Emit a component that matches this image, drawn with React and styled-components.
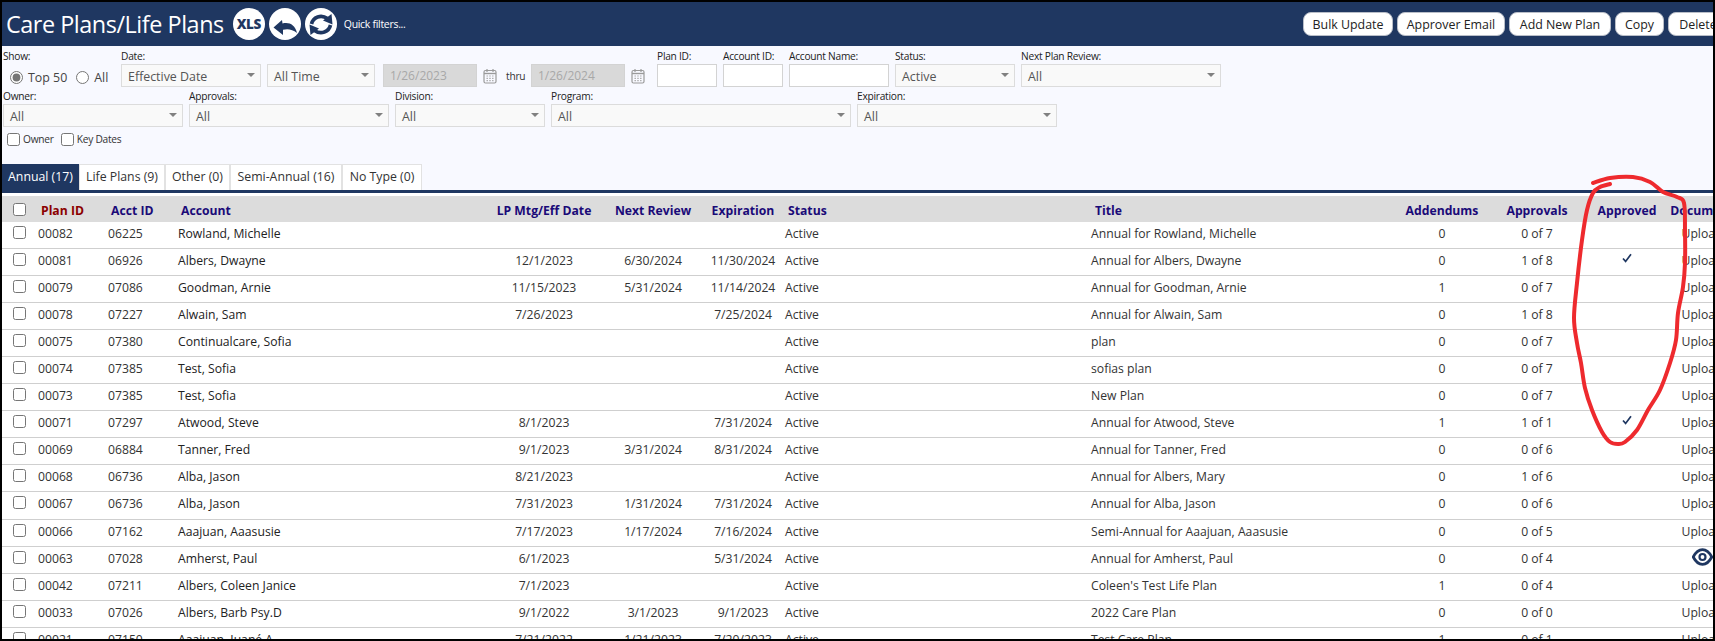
import React from 'react';
import styled, { createGlobalStyle } from 'styled-components';

const FONT = '"Open Sans", "Noto Sans", "Liberation Sans", sans-serif';
const NAVY = '#1f3761';

const Global = createGlobalStyle`
  html, body { margin: 0; padding: 0; background: #000; overflow: hidden; }
  * { box-sizing: border-box; }
  body { font-family: ${FONT}; }
`;

const Frame = styled.div`
  position: relative;
  width: 1715px;
  height: 641px;
  border: 2px solid #000;
  background: #fff;
  overflow: hidden;
`;

const TopBar = styled.header`
  display: flex;
  align-items: center;
  height: 44px;
  background: ${NAVY};
  overflow: hidden;
`;

const TitleGroup = styled.div`
  flex: 0 0 1301px;
  display: flex;
  align-items: center;
  padding-left: 4px;
`;

const PageTitle = styled.h1`
  margin: 0 9px 0 0;
  font-size: 23.4px;
  font-weight: 400;
  letter-spacing: -0.45px;
  color: #fff;
  white-space: nowrap;
`;

const RoundIcon = styled.span`
  flex: none;
  display: flex;
  align-items: center;
  justify-content: center;
  width: 32px;
  height: 32px;
  margin-right: 4px;
  border-radius: 50%;
  background: #fff;
  color: ${NAVY};
  font-size: 13.5px;
  font-weight: 800;
  letter-spacing: -0.4px;
`;

const QuickFilters = styled.span`
  margin-left: 3px;
  font-size: 10.5px;
  letter-spacing: -0.3px;
  color: #fff;
  white-space: nowrap;
`;

const ButtonGroup = styled.div`
  display: flex;
  gap: 4px;
  flex: none;
`;

const PillButton = styled.button`
  flex: none;
  width: ${p => p.$w}px;
  height: 24px;
  padding: 0;
  border: 1px solid #b9bec8;
  border-radius: 8px;
  background: #fff;
  color: #222;
  font-family: ${FONT};
  font-size: 12.4px;
  white-space: nowrap;
`;

const FilterPanel = styled.section`
  display: flex;
  flex-direction: column;
  height: 144px;
  padding: 4px 0 0 1px;
  background: #f8f9ff;
`;

const FilterRow = styled.div`
  display: flex;
  gap: 6px;
  margin-bottom: 3px;
`;

const Field = styled.div`
  display: flex;
  flex-direction: column;
  flex: none;
  width: ${p => (p.$w ? `${p.$w}px` : 'auto')};
`;

const FieldLabel = styled.label`
  height: 14px;
  font-size: 10.2px;
  line-height: 12px;
  letter-spacing: -0.25px;
  color: #222;
  white-space: nowrap;
`;

const ControlRow = styled.div`
  display: flex;
  align-items: center;
  gap: 6px;
  height: 23px;
`;

const Select = styled.div`
  position: relative;
  flex: none;
  width: ${p => p.$w}px;
  height: 23px;
  padding-left: 6px;
  border: 1px solid #dcdcdc;
  background: #f9f9f9;
  color: #555;
  font-size: 12.4px;
  line-height: 23px;
  white-space: nowrap;
  &::after {
    content: '';
    position: absolute;
    top: 8px;
    right: 5px;
    border-style: solid;
    border-width: 4px 4px 0;
    border-color: #808080 transparent transparent;
  }
`;

const DateInput = styled.input`
  flex: none;
  width: 94px;
  height: 23px;
  margin-left: ${p => p.$ml || 0}px;
  padding: 0 0 0 6px;
  border: 1px solid #d3d3d3;
  background: #d9d9d9;
  color: #a8a8a8;
  font-family: ${FONT};
  font-size: 12px;
`;

const TextInput = styled.input`
  display: block;
  width: 100%;
  height: 23px;
  border: 1px solid #d3d3d3;
  background: #fff;
`;

const CalIcon = styled.svg`
  flex: none;
  width: 14px;
  height: 16px;
  margin-right: ${p => p.$mr || 0}px;
`;

const Thru = styled.span`
  margin-left: 3px;
  width: 19px;
  font-size: 10.2px;
  letter-spacing: -0.25px;
  color: #333;
`;

const ShowOptions = styled.div`
  display: flex;
  align-items: center;
  height: 23px;
  padding: 3px 0 0 7px;
`;

const Radio = styled.input`
  flex: none;
  width: 13px;
  height: 13px;
  margin: 0 5px 0 0;
  accent-color: #757575;
`;

const RadioText = styled.span`
  margin-right: 9px;
  font-size: 12.4px;
  color: #444;
  white-space: nowrap;
`;

const CheckRow = styled.div`
  display: flex;
  align-items: center;
  height: 14px;
  margin-top: 2px;
  padding-left: 4px;
`;

const SmallBox = styled.input`
  flex: none;
  width: 13px;
  height: 13px;
  margin: 0 3px 0 0;
`;

const SmallBoxText = styled.span`
  margin-right: 7px;
  font-size: 10.2px;
  letter-spacing: -0.25px;
  color: #333;
`;

const TabBar = styled.nav`
  display: flex;
  margin-top: auto;
  margin-left: -1px;
  height: 26px;
`;

const Tab = styled.div`
  flex: none;
  width: ${p => p.$w}px;
  height: 26px;
  border: 1px solid ${p => (p.$active ? NAVY : '#e2e2e2')};
  border-bottom: 0;
  background: ${p => (p.$active ? NAVY : '#fff')};
  color: ${p => (p.$active ? '#fff' : '#333')};
  font-size: 12.3px;
  line-height: 24px;
  text-align: center;
  white-space: nowrap;
`;

const TabLine = styled.div`
  height: 3px;
  margin-bottom: 3px;
  background: ${NAVY};
`;

const COLUMNS = '31px 70px 70px 315px 112px 106px 74px 306px 307px 98px 92px 88px 62px';

const HeadRow = styled.div`
  display: grid;
  grid-template-columns: ${COLUMNS};
  align-items: center;
  height: 26px;
  background: #dcdcdc;
`;

const HeadCell = styled.div`
  padding-left: ${p => (p.$center ? 0 : p.$pad || 8)}px;
  padding-top: 2px;
  font-size: 12.2px;
  font-weight: 700;
  color: ${p => (p.$sorted ? '#8b0000' : '#1a0a78')};
  text-align: ${p => (p.$center ? 'center' : 'left')};
  white-space: nowrap;
  justify-self: ${p => (p.$center ? 'center' : 'stretch')};
`;

const BodyRow = styled.div`
  display: grid;
  grid-template-columns: ${COLUMNS};
  height: ${p => (p.$tall ? 28 : 27)}px;
  border-bottom: 1px solid #cfcfcf;
`;

const BodyCell = styled.div`
  padding: 3px 0 0 ${p => (p.$center ? 0 : 5)}px;
  font-size: 12.2px;
  line-height: 18px;
  color: ${p => p.$c || '#333'};
  text-align: ${p => (p.$center ? 'center' : 'left')};
  white-space: nowrap;
  justify-self: ${p => (p.$center ? 'center' : 'stretch')};
`;

const BoxCell = styled.div`
  padding: ${p => (p.$head ? 0 : 4)}px 0 0 11px;
  line-height: 0;
`;

const RowBox = styled.input`
  width: 13px;
  height: 13px;
  margin: 0;
`;

const Annotation = styled.svg`
  position: absolute;
  top: -2px;
  left: -2px;
  width: 1715px;
  height: 641px;
  pointer-events: none;
`;

const CheckMark = styled.svg`
  display: block;
  width: 10px;
  height: 10px;
  margin: 1px auto 0;
`;

const EyeIcon = styled.svg`
  display: block;
  width: 21px;
  height: 18px;
  margin-top: -2px;
`;

const Calendar = ({ mr }) => (
  <CalIcon $mr={mr} viewBox="0 0 14 16" fill="none">
    <rect x="1" y="2.5" width="12" height="12.5" rx="1.5" stroke="#9a9a9a" strokeWidth="1.2" />
    <path d="M1 5.5h12" stroke="#9a9a9a" strokeWidth="1.4" />
    <path d="M4 1v3M10 1v3" stroke="#9a9a9a" strokeWidth="1.2" />
    <path d="M3.5 8h1.4M6.3 8h1.4M9.1 8h1.4M3.5 10.3h1.4M6.3 10.3h1.4M9.1 10.3h1.4M3.5 12.6h1.4M6.3 12.6h1.4M9.1 12.6h1.4" stroke="#a8a8a8" strokeWidth="1.2" />
  </CalIcon>
);

const BackArrow = () => (
  <svg width="32" height="32" viewBox="0 0 32 32">
    <path d="M4.5 19.5 L13 12 L13.5 15.5 C20 13.8 26 16.5 28 25 C23.5 21.2 18.5 20.6 14 21.8 L14 27 Z" fill="currentColor" />
  </svg>
);

const SyncArrows = () => (
  <svg width="32" height="32" viewBox="0 0 32 32" fill="none">
    <path d="M6.5 16 C8 9 16 6 22.5 10.5" stroke="currentColor" strokeWidth="3.6" />
    <path d="M27.5 16.5 L26.5 6 L18 12.5 Z" fill="currentColor" />
    <path d="M25.5 17 C24 24 16 27 9.5 22.5" stroke="currentColor" strokeWidth="3.6" />
    <path d="M4.5 16.5 L5.5 27 L14 20.5 Z" fill="currentColor" />
  </svg>
);

const Check = () => (
  <CheckMark viewBox="0 0 10 10" fill="none">
    <path d="M1 5.5 L3.6 8.4 L9 1.2" stroke={NAVY} strokeWidth="1.7" />
  </CheckMark>
);

const Eye = () => (
  <EyeIcon viewBox="0 0 21 18" fill="none">
    <path d="M1.2 9 C4 3.6 7 1.6 10.5 1.6 S17 3.6 19.8 9 C17 14.4 14 16.4 10.5 16.4 S4 14.4 1.2 9 Z" stroke={NAVY} strokeWidth="2.8" />
    <circle cx="10.5" cy="9" r="3" stroke={NAVY} strokeWidth="2.2" />
  </EyeIcon>
);

const rows = [
  ['00082', '06225', 'Rowland, Michelle', '', '', '', 'Annual for Rowland, Michelle', '0', '0 of 7'],
  ['00081', '06926', 'Albers, Dwayne', '12/1/2023', '6/30/2024', '11/30/2024', 'Annual for Albers, Dwayne', '0', '1 of 8', true],
  ['00079', '07086', 'Goodman, Arnie', '11/15/2023', '5/31/2024', '11/14/2024', 'Annual for Goodman, Arnie', '1', '0 of 7'],
  ['00078', '07227', 'Alwain, Sam', '7/26/2023', '', '7/25/2024', 'Annual for Alwain, Sam', '0', '1 of 8'],
  ['00075', '07380', 'Continualcare, Sofia', '', '', '', 'plan', '0', '0 of 7'],
  ['00074', '07385', 'Test, Sofia', '', '', '', 'sofias plan', '0', '0 of 7'],
  ['00073', '07385', 'Test, Sofia', '', '', '', 'New Plan', '0', '0 of 7'],
  ['00071', '07297', 'Atwood, Steve', '8/1/2023', '', '7/31/2024', 'Annual for Atwood, Steve', '1', '1 of 1', true],
  ['00069', '06884', 'Tanner, Fred', '9/1/2023', '3/31/2024', '8/31/2024', 'Annual for Tanner, Fred', '0', '0 of 6'],
  ['00068', '06736', 'Alba, Jason', '8/21/2023', '', '', 'Annual for Albers, Mary', '0', '1 of 6'],
  ['00067', '06736', 'Alba, Jason', '7/31/2023', '1/31/2024', '7/31/2024', 'Annual for Alba, Jason', '0', '0 of 6'],
  ['00066', '07162', 'Aaajuan, Aaasusie', '7/17/2023', '1/17/2024', '7/16/2024', 'Semi-Annual for Aaajuan, Aaasusie', '0', '0 of 5'],
  ['00063', '07028', 'Amherst, Paul', '6/1/2023', '', '5/31/2024', 'Annual for Amherst, Paul', '0', '0 of 4'],
  ['00042', '07211', 'Albers, Coleen Janice', '7/1/2023', '', '', "Coleen's Test Life Plan", '1', '0 of 4'],
  ['00033', '07026', 'Albers, Barb Psy.D', '9/1/2022', '3/1/2023', '9/1/2023', '2022 Care Plan', '0', '0 of 0'],
  ['00021', '07150', 'Aaajuan, Juané A', '7/21/2022', '1/21/2023', '7/20/2023', 'Test Care Plan', '1', '0 of 1'],
];

const redPoints = [
  [1593, 183], [1610, 178], [1633, 177], [1650, 182], [1663, 192], [1677, 197], [1684, 203],
  [1685, 230], [1685, 263], [1683, 287], [1678, 313], [1676, 340], [1670, 363], [1660, 390],
  [1648, 410], [1637, 430], [1625, 442], [1618, 444], [1610, 442], [1602, 432], [1592, 410],
  [1585, 388], [1581, 363], [1577, 343], [1574, 318], [1577, 283], [1582, 240], [1587, 210],
  [1593, 193], [1600, 187], [1610, 184],
];

const smooth = pts => {
  let d = `M${pts[0][0]} ${pts[0][1]}`;
  for (let i = 0; i < pts.length - 1; i++) {
    const p0 = pts[i - 1] || pts[i];
    const p1 = pts[i];
    const p2 = pts[i + 1];
    const p3 = pts[i + 2] || p2;
    const c1x = p1[0] + (p2[0] - p0[0]) / 6;
    const c1y = p1[1] + (p2[1] - p0[1]) / 6;
    const c2x = p2[0] - (p3[0] - p1[0]) / 6;
    const c2y = p2[1] - (p3[1] - p1[1]) / 6;
    d += ` C${c1x} ${c1y} ${c2x} ${c2y} ${p2[0]} ${p2[1]}`;
  }
  return d;
};

export default function App() {
  return (
    <>
      <Global />
      <Frame>
        <TopBar>
          <TitleGroup>
            <PageTitle>Care Plans/Life Plans</PageTitle>
            <RoundIcon>XLS</RoundIcon>
            <RoundIcon><BackArrow /></RoundIcon>
            <RoundIcon><SyncArrows /></RoundIcon>
            <QuickFilters>Quick filters...</QuickFilters>
          </TitleGroup>
          <ButtonGroup>
            <PillButton $w={90}>Bulk Update</PillButton>
            <PillButton $w={108}>Approver Email</PillButton>
            <PillButton $w={102}>Add New Plan</PillButton>
            <PillButton $w={49}>Copy</PillButton>
            <PillButton $w={60}>Delete</PillButton>
          </ButtonGroup>
        </TopBar>

        <FilterPanel>
          <FilterRow>
            <Field $w={112}>
              <FieldLabel>Show:</FieldLabel>
              <ShowOptions>
                <Radio type="radio" name="show" defaultChecked />
                <RadioText>Top 50</RadioText>
                <Radio type="radio" name="show" />
                <RadioText>All</RadioText>
              </ShowOptions>
            </Field>
            <Field>
              <FieldLabel>Date:</FieldLabel>
              <ControlRow>
                <Select $w={140}>Effective Date</Select>
                <Select $w={108}>All Time</Select>
                <DateInput $ml={2} disabled defaultValue="1/26/2023" />
                <Calendar />
                <Thru>thru</Thru>
                <DateInput disabled defaultValue="1/26/2024" />
                <Calendar mr={6} />
              </ControlRow>
            </Field>
            <Field $w={60}><FieldLabel>Plan ID:</FieldLabel><TextInput /></Field>
            <Field $w={60}><FieldLabel>Account ID:</FieldLabel><TextInput /></Field>
            <Field $w={100}><FieldLabel>Account Name:</FieldLabel><TextInput /></Field>
            <Field $w={120}><FieldLabel>Status:</FieldLabel><Select $w={120}>Active</Select></Field>
            <Field $w={200}><FieldLabel>Next Plan Review:</FieldLabel><Select $w={200}>All</Select></Field>
          </FilterRow>
          <FilterRow>
            <Field $w={180}><FieldLabel>Owner:</FieldLabel><Select $w={180}>All</Select></Field>
            <Field $w={200}><FieldLabel>Approvals:</FieldLabel><Select $w={200}>All</Select></Field>
            <Field $w={150}><FieldLabel>Division:</FieldLabel><Select $w={150}>All</Select></Field>
            <Field $w={300}><FieldLabel>Program:</FieldLabel><Select $w={300}>All</Select></Field>
            <Field $w={200}><FieldLabel>Expiration:</FieldLabel><Select $w={200}>All</Select></Field>
          </FilterRow>
          <CheckRow>
            <SmallBox type="checkbox" />
            <SmallBoxText>Owner</SmallBoxText>
            <SmallBox type="checkbox" />
            <SmallBoxText>Key Dates</SmallBoxText>
          </CheckRow>
          <TabBar>
            <Tab $active $w={77}>Annual (17)</Tab>
            <Tab $w={86}>Life Plans (9)</Tab>
            <Tab $w={65}>Other (0)</Tab>
            <Tab $w={112}>Semi-Annual (16)</Tab>
            <Tab $w={80}>No Type (0)</Tab>
          </TabBar>
        </FilterPanel>
        <TabLine />

        <HeadRow>
          <BoxCell $head><RowBox type="checkbox" /></BoxCell>
          <HeadCell $sorted>Plan ID</HeadCell>
          <HeadCell>Acct ID</HeadCell>
          <HeadCell>Account</HeadCell>
          <HeadCell $center>LP Mtg/Eff Date</HeadCell>
          <HeadCell $center>Next Review</HeadCell>
          <HeadCell $center>Expiration</HeadCell>
          <HeadCell>Status</HeadCell>
          <HeadCell $pad={9}>Title</HeadCell>
          <HeadCell $center>Addendums</HeadCell>
          <HeadCell $center>Approvals</HeadCell>
          <HeadCell $center>Approved</HeadCell>
          <HeadCell $center>Document</HeadCell>
        </HeadRow>

        {rows.map(r => (
          <BodyRow key={r[0]} $tall={r[0] === '00067'}>
            <BoxCell><RowBox type="checkbox" /></BoxCell>
            <BodyCell>{r[0]}</BodyCell>
            <BodyCell>{r[1]}</BodyCell>
            <BodyCell $c="#222">{r[2]}</BodyCell>
            <BodyCell $center>{r[3]}</BodyCell>
            <BodyCell $center>{r[4]}</BodyCell>
            <BodyCell $center>{r[5]}</BodyCell>
            <BodyCell>Active</BodyCell>
            <BodyCell>{r[6]}</BodyCell>
            <BodyCell $center>{r[7]}</BodyCell>
            <BodyCell $center>{r[8]}</BodyCell>
            <BodyCell $center>{r[9] ? <Check /> : ''}</BodyCell>
            <BodyCell $center>{r[0] === '00063' ? <Eye /> : 'Upload'}</BodyCell>
          </BodyRow>
        ))}

        <Annotation viewBox="0 0 1715 641" fill="none">
          <path d={smooth(redPoints)} stroke="#ee2a2e" strokeWidth="4" strokeLinecap="round" strokeLinejoin="round" />
        </Annotation>
      </Frame>
    </>
  );
}
